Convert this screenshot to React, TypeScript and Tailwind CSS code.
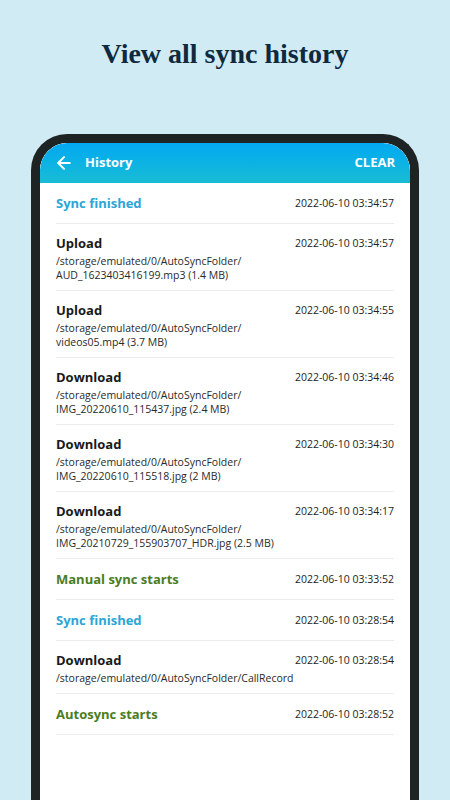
import { ArrowLeft } from "lucide-react";

type Entry = {
  title: string;
  kind: "sync" | "start" | "file";
  date: string;
  path?: string[];
};

const entries: Entry[] = [
  { title: "Sync finished", kind: "sync", date: "2022-06-10 03:34:57" },
  {
    title: "Upload",
    kind: "file",
    date: "2022-06-10 03:34:57",
    path: ["/storage/emulated/0/AutoSyncFolder/", "AUD_1623403416199.mp3 (1.4 MB)"],
  },
  {
    title: "Upload",
    kind: "file",
    date: "2022-06-10 03:34:55",
    path: ["/storage/emulated/0/AutoSyncFolder/", "videos05.mp4 (3.7 MB)"],
  },
  {
    title: "Download",
    kind: "file",
    date: "2022-06-10 03:34:46",
    path: ["/storage/emulated/0/AutoSyncFolder/", "IMG_20220610_115437.jpg (2.4 MB)"],
  },
  {
    title: "Download",
    kind: "file",
    date: "2022-06-10 03:34:30",
    path: ["/storage/emulated/0/AutoSyncFolder/", "IMG_20220610_115518.jpg (2 MB)"],
  },
  {
    title: "Download",
    kind: "file",
    date: "2022-06-10 03:34:17",
    path: ["/storage/emulated/0/AutoSyncFolder/", "IMG_20210729_155903707_HDR.jpg (2.5 MB)"],
  },
  { title: "Manual sync starts", kind: "start", date: "2022-06-10 03:33:52" },
  { title: "Sync finished", kind: "sync", date: "2022-06-10 03:28:54" },
  {
    title: "Download",
    kind: "file",
    date: "2022-06-10 03:28:54",
    path: ["/storage/emulated/0/AutoSyncFolder/CallRecord"],
  },
  { title: "Autosync starts", kind: "start", date: "2022-06-10 03:28:52" },
];

const titleColor = {
  sync: "text-[#2ba6d6]",
  start: "text-[#4b7d1e]",
  file: "text-[#1a1a1a]",
};

const Row = ({ entry }: { entry: Entry }) => {
  const hasPath = !!entry.path;
  return (
    <div className={`border-b border-[#ececec] ${hasPath ? "pt-[10px] pb-[8px]" : "py-[11px]"}`}>
      <div className="flex items-center justify-between">
        <span className={`text-[13px] leading-[18px] font-bold ${titleColor[entry.kind]}`}>
          {entry.title}
        </span>
        <span className="text-[10.5px] leading-[18px] text-[#1e1e1e]">{entry.date}</span>
      </div>
      {hasPath && (
        <div className="mt-[2px] text-[10.5px] leading-[14px] text-[#2a2a2a]">
          {entry.path!.map((line, i) => (
            <div key={i}>{line}</div>
          ))}
        </div>
      )}
    </div>
  );
};

export default function App() {
  return (
    <div className="w-[450px] h-[800px] overflow-hidden bg-[#d0ebf4] flex flex-col">
      <h1
        className="text-center text-[28px] font-bold text-[#0f2a3e] pt-[33px] h-[134px]"
        style={{ fontFamily: '"Liberation Serif", "DejaVu Serif", serif' }}
      >
        View all sync history
      </h1>
      <div className="mx-[31px] flex-1 border-[9px] border-b-0 border-[#1e2324] rounded-t-[36px] bg-white overflow-hidden">
        <div
          className="h-full rounded-t-[27px] overflow-hidden bg-white"
          style={{ fontFamily: '"Open Sans", "Noto Sans", sans-serif' }}
        >
          <div className="h-[40px] bg-gradient-to-b from-[#03a8f2] to-[#19bcd4] flex items-center pl-[14px] pr-[15px] text-white">
            <ArrowLeft size={20} strokeWidth={2.4} />
            <span className="ml-[11px] text-[13px] font-bold">History</span>
            <span className="ml-auto text-[13px] font-bold">CLEAR</span>
          </div>
          <div className="px-[16px]">
            {entries.map((e, i) => (
              <Row key={i} entry={e} />
            ))}
          </div>
        </div>
      </div>
    </div>
  );
}
